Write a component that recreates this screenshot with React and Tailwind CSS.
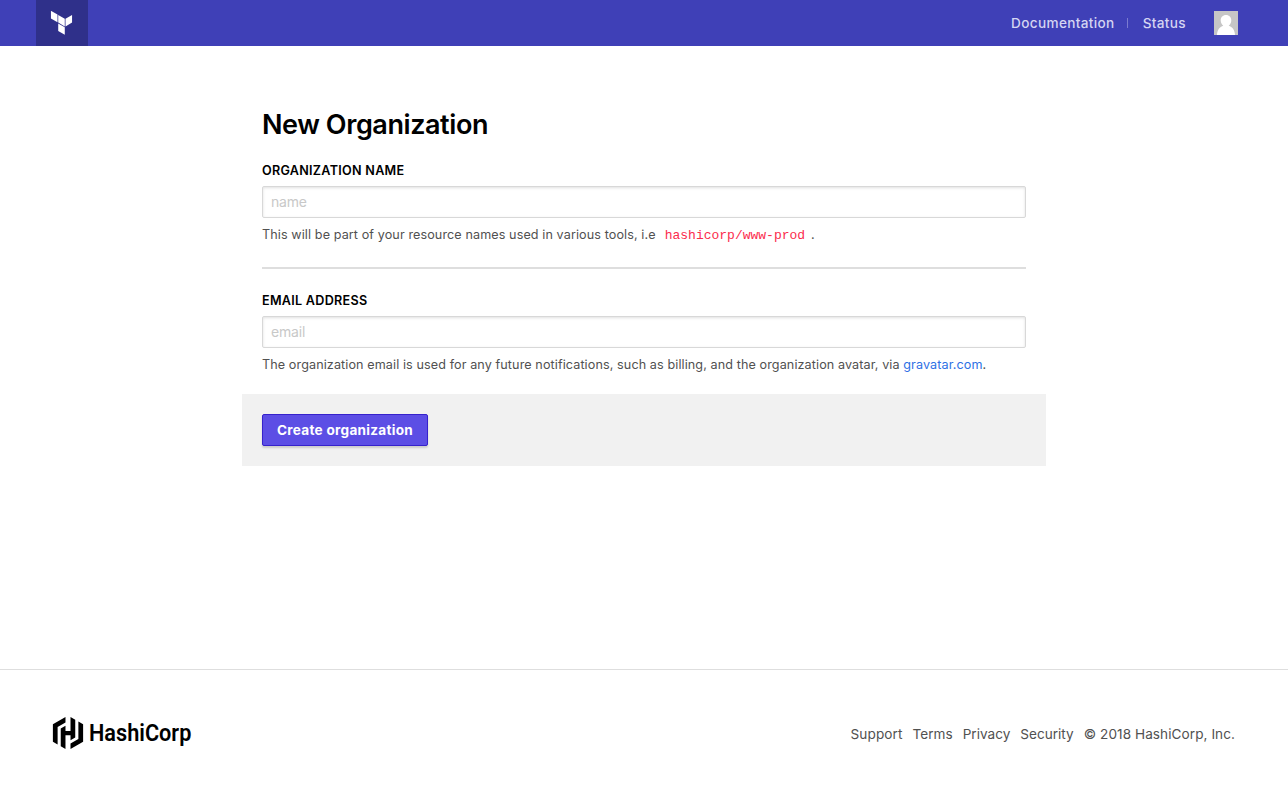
import React from "react";
import { SiHashicorp } from "react-icons/si";

function TerraformMark() {
  return (
    <svg width="24" height="24" viewBox="0.5 0.200 24 24" fill="#fff">
      <path d="M1.44 0v7.575l6.561 3.79V3.787zm21.12 4.227l-6.561 3.791v7.574l6.56-3.787zM8.72 4.23v7.575l6.561 3.787V8.018zm0 8.405v7.575L15.28 24v-7.578z" />
    </svg>
  );
}

function Avatar() {
  return (
    <svg className="ml-7 block" width="24" height="24" viewBox="0 0 24 24">
      <rect width="24" height="24" fill="#c6c6c6" />
      <path
        fill="#fff"
        d="M12 4C8.8 4 6.7 6.300 6.700 9.300C6.700 11.700 7.900 13.500 9.300 14.700C5.700 15.800 3.300 18.500 3 24H21C20.700 18.500 18.300 15.800 14.700 14.700C16.100 13.500 17.300 11.700 17.300 9.300C17.300 6.300 15.200 4 12 4Z"
      />
    </svg>
  );
}

function Header() {
  return (
    <header className="flex h-[46px] items-center bg-[#3f40b7] pr-[50px] pl-9">
      <a className="flex h-full w-[52px] items-center justify-center bg-[#2f308a]">
        <TerraformMark />
      </a>
      <nav className="ml-auto flex items-center text-[13.6px] leading-5 font-medium tracking-[0.34px] text-[#d5d5f2]">
        <a>Documentation</a>
        <span className="mr-[14.5px] ml-[12.5px] h-[10px] w-px bg-[#7b7bd0]" />
        <a>Status</a>
        <Avatar />
      </nav>
    </header>
  );
}

function Field({ label, placeholder, children }) {
  return (
    <div>
      <label className="block text-[12.6px] leading-5 font-semibold tracking-[0.28px] text-black uppercase">
        {label}
      </label>
      <input
        className="mt-[5px] block h-8 w-full rounded-[2px] border border-[#d8d8d8] bg-white px-2 pb-px text-[14px] tracking-[-0.2px] shadow-[inset_0_1px_3px_rgba(0,0,0,0.12)] outline-none placeholder:text-[#c8c8c8]"
        placeholder={placeholder}
      />
      <p className="mt-[7px] h-5 text-[12.6px] leading-5 tracking-[0.1px] whitespace-nowrap text-[#515151]">
        {children}
      </p>
    </div>
  );
}

function Footer() {
  return (
    <footer className="mt-auto flex h-[127px] items-center justify-between border-t border-[#dedede] pr-[53px] pl-[52px]">
      <a className="flex items-center text-black">
        <SiHashicorp size={32} />
        <span className="ml-[5px] inline-block h-8 w-[116px] origin-left scale-x-[0.885] font-['Roboto',sans-serif] text-[24.5px] leading-8 font-semibold">
          HashiCorp
        </span>
      </a>
      <nav className="flex gap-[10px] pt-0.5 text-[13.6px] leading-5 text-[#515151]">
        <a className="tracking-[0.1px]">Support</a>
        <a>Terms</a>
        <a>Privacy</a>
        <a>Security</a>
        <span className="tracking-[0.06px]">© 2018 HashiCorp, Inc.</span>
      </nav>
    </footer>
  );
}

export default function App() {
  return (
    <div className="flex h-[796px] flex-col bg-white font-['Inter',sans-serif]">
      <Header />
      <main className="mx-auto w-[804px] pt-[61px]">
        <div className="px-5">
          <h1 className="text-[27px] leading-9 font-semibold tracking-[-0.42px] text-black">New Organization</h1>
          <div className="mt-[18px]">
            <Field label="Organization Name" placeholder="name">
              This will be part of your resource names used in various tools, i.e
              <code className="mr-[6px] ml-[9px] font-['Liberation_Mono',monospace] text-[13px] tracking-normal text-[#fb2b4d]">
                hashicorp/www-prod
              </code>
              .
            </Field>
          </div>
          <hr className="mt-[22px] mb-[22px] border-t-2 border-[#dedede]" />
          <Field label="Email Address" placeholder="email">
            The organization email is used for any future notifications, such as billing, and the organization avatar,
            via <a className="text-[#2e71e5]">gravatar.com</a>.
          </Field>
        </div>
        <div className="mt-[19px] h-[72px] bg-[#f1f1f1] p-5">
          <button className="block h-8 w-[166px] rounded-[2px] border border-[#3622cc] bg-[#5c4ee5] text-[13.6px] leading-[30px] font-bold tracking-[0.28px] text-white shadow-[0_2px_2px_rgba(0,0,0,0.15)]">
            Create organization
          </button>
        </div>
      </main>
      <Footer />
    </div>
  );
}
